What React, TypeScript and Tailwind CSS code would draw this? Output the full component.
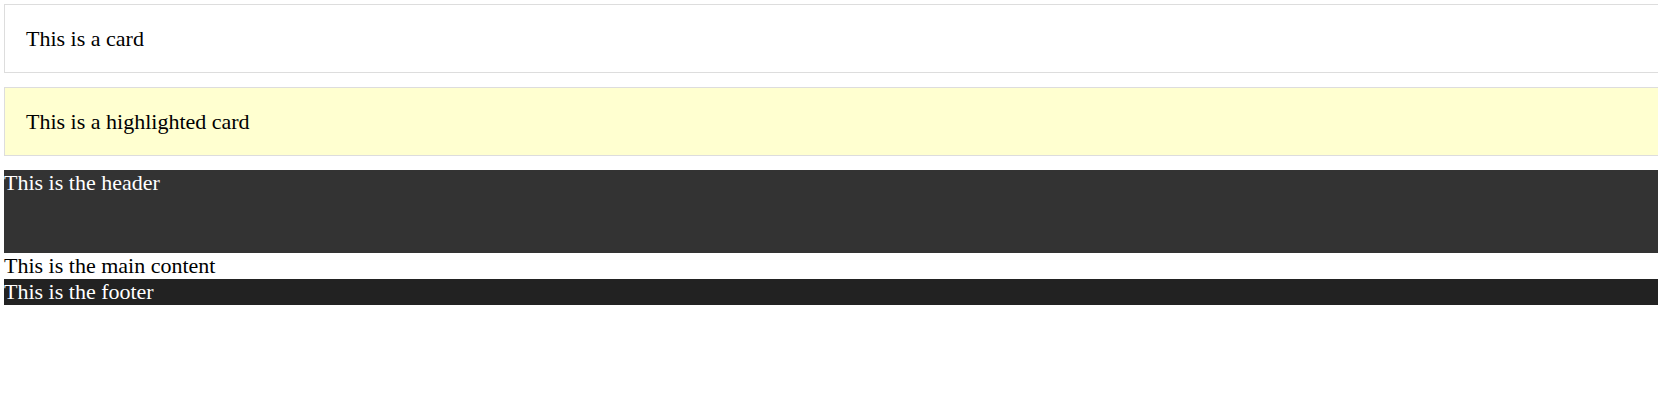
// App.tsx — two cards (plain and highlighted) followed by a header / main / footer stack.

function Card({ text, highlighted = false }: { text: string; highlighted?: boolean }) {
  return (
    <div
      className={
        highlighted
          ? 'flex h-[69px] items-center border border-r-0 border-[#dddddd] bg-[#ffffd0] px-[21px]'
          : 'flex h-[69px] items-center border border-r-0 border-[#dddddd] bg-white px-[21px]'
      }
    >
      {text}
    </div>
  )
}

export default function App() {
  return (
    <div
      className="flex flex-col bg-white pl-1 pt-1 text-[22px] leading-[26px] text-black"
      style={{ fontFamily: '"Liberation Serif", "Times New Roman", serif' }}
    >
      <div className="mb-[14px]">
        <Card text="This is a card" />
      </div>
      <div className="mb-[14px]">
        <Card text="This is a highlighted card" highlighted />
      </div>

      <header className="h-[83px] bg-[#333333] text-white">This is the header</header>
      <main className="h-[26px]">This is the main content</main>
      <footer className="h-[26px] bg-[#222222] text-white">This is the footer</footer>
    </div>
  )
}
